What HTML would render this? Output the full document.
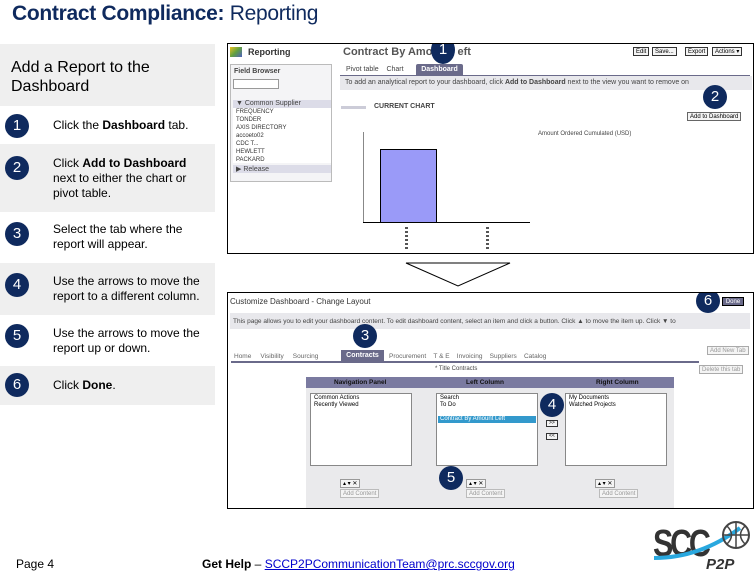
<!DOCTYPE html><html><head><style>
*{margin:0;padding:0;box-sizing:border-box}
body{width:756px;height:576px;position:relative;background:#fff;font-family:"Liberation Sans",sans-serif;overflow:hidden}
.a{position:absolute}
.c{position:absolute;width:24px;height:24px;border-radius:50%;background:#0f2a5e;color:#fff;font-size:15px;text-align:center;line-height:24px}
.t{position:absolute;left:53px;font-size:12px;color:#000;line-height:15px}
.g{background:#efefef}
.s{font-size:7px;color:#444}
.btn{position:absolute;border:1px solid #333;background:#f4f4f4;font-size:6px;padding:0 2px;height:9px;line-height:8px}
</style></head><body>
<div class="a" style="left:12px;top:2px;font-size:21px;color:#0f2a5e;font-weight:bold;letter-spacing:-0.3px">Contract Compliance: <span style="font-weight:normal">Reporting</span></div>

<div class="a g" style="left:0;top:44px;width:215px;height:62px"></div>
<div class="a" style="left:11px;top:58px;font-size:16px;line-height:19px">Add a Report to the<br>Dashboard</div>
<div class="a g" style="left:0;top:144px;width:215px;height:68px"></div>
<div class="a g" style="left:0;top:263px;width:215px;height:52px"></div>
<div class="a g" style="left:0;top:366px;width:215px;height:39px"></div>
<div class="c" style="left:5px;top:114px">1</div><div class="t" style="top:118px">Click the <b>Dashboard</b> tab.</div>
<div class="c" style="left:5px;top:156px">2</div><div class="t" style="top:156px">Click <b>Add to Dashboard</b><br>next to either the chart or<br>pivot table.</div>
<div class="c" style="left:5px;top:222px">3</div><div class="t" style="top:222px">Select the tab where the<br>report will appear.</div>
<div class="c" style="left:5px;top:273px">4</div><div class="t" style="top:274px">Use the arrows to move the<br>report to a different column.</div>
<div class="c" style="left:5px;top:324px">5</div><div class="t" style="top:326px">Use the arrows to move the<br>report up or down.</div>
<div class="c" style="left:5px;top:373px">6</div><div class="t" style="top:378px">Click <b>Done</b>.</div>

<!-- screenshot 1 -->
<div class="a" style="left:227px;top:43px;width:527px;height:211px;border:1px solid #000;overflow:hidden">
 <div class="a" style="left:2px;top:3px;width:12px;height:10px;background:linear-gradient(135deg,#e8c020,#60a040,#5060c0)"></div>
 <div class="a" style="left:20px;top:3px;font-size:9px;font-weight:bold;color:#333">Reporting</div>
 <div class="a" style="left:2px;top:20px;width:102px;height:118px;border:1px solid #bbb;background:#f4f4f6"></div>
 <div class="a s" style="left:6px;top:24px;font-weight:bold">Field Browser</div>
 <div class="a" style="left:5px;top:35px;width:46px;height:10px;border:1px solid #999;background:#fff"></div>
 <div class="a" style="left:5px;top:56px;width:98px;height:8px;background:#dcdce8"></div>
 <div class="a s" style="left:8px;top:56px">▼ Common Supplier</div>
 <div class="a" style="left:5px;top:64px;width:98px;height:55px;background:#fff;font-size:6px;color:#333;line-height:8px;padding-left:3px">FREQUENCY<br>TONDER<br>AXIS DIRECTORY<br>accoeto02<br>CDC T...<br>HEWLETT<br>PACKARD</div>
 <div class="a" style="left:5px;top:121px;width:98px;height:8px;background:#dcdce8"></div>
 <div class="a s" style="left:8px;top:121px">▶ Release</div>
 <div class="a" style="left:115px;top:2px;font-size:11px;font-weight:bold;color:#555">Contract By Amou&nbsp;&nbsp;&nbsp;&nbsp;&nbsp;&nbsp;eft</div>
 <div class="btn" style="left:405px;top:3px">Edit</div><div class="btn" style="left:424px;top:3px">Save...</div><div class="btn" style="left:457px;top:3px">Export</div><div class="btn" style="left:484px;top:3px">Actions ▾</div>
 <div class="a s" style="left:118px;top:22px">Pivot table&nbsp;&nbsp;&nbsp;&nbsp;Chart</div>
 <div class="a" style="left:188px;top:20px;width:47px;height:11px;background:#6a6a8a;color:#fff;font-size:7px;font-weight:bold;text-align:center;line-height:11px;border-radius:2px 2px 0 0">Dashboard</div>
 <div class="a" style="left:112px;top:31px;width:410px;height:1px;background:#6a6a8a"></div>
 <div class="a" style="left:112px;top:32px;width:412px;height:14px;background:#e8e8ec"></div>
 <div class="a s" style="left:117px;top:35px">To add an analytical report to your dashboard, click <b>Add to Dashboard</b> next to the view you want to remove on</div>
 <div class="a" style="left:113px;top:62px;width:25px;height:3px;background:#ccccd8"></div>
 <div class="a s" style="left:146px;top:59px;font-weight:bold">CURRENT CHART</div>
 <div class="btn" style="left:459px;top:68px;border-color:#666">Add to Dashboard</div>
 <div class="a s" style="left:310px;top:87px;font-size:6px">Amount Ordered Cumulated (USD)</div>
 <div class="a" style="left:135px;top:88px;width:1px;height:90px;background:#888"></div>
 <div class="a" style="left:135px;top:178px;width:167px;height:1px;background:#000"></div>
 <div class="a" style="left:152px;top:105px;width:57px;height:74px;background:#9a9af8;border:1px solid #000"></div>
 <div class="a" style="left:177px;top:183px;width:3px;height:24px;background:repeating-linear-gradient(#555 0 2px,#fff 2px 4px)"></div>
 <div class="a" style="left:258px;top:183px;width:3px;height:24px;background:repeating-linear-gradient(#555 0 2px,#fff 2px 4px)"></div>
 <div class="c" style="left:203px;top:-8px;width:24px;height:28px;border-radius:50%;line-height:28px">1</div>
 <div class="c" style="left:475px;top:41px">2</div>
</div>

<svg class="a" style="left:404px;top:260px" width="108" height="28"><polygon points="2,3 106,3 54,26" fill="#fff" stroke="#000" stroke-width="1"/></svg>

<!-- screenshot 2 -->
<div class="a" style="left:227px;top:292px;width:527px;height:217px;border:1px solid #000;overflow:hidden">
 <div class="a" style="left:2px;top:4px;font-size:8px;color:#333">Customize Dashboard - Change Layout</div>
 <div class="a" style="left:494px;top:4px;width:22px;height:9px;background:#6a6a8a;color:#fff;font-size:6px;text-align:center;line-height:9px;border:1px solid #000">Done</div>
 <div class="a" style="left:2px;top:20px;width:520px;height:16px;background:#e8e8ec"></div>
 <div class="a s" style="left:5px;top:25px;font-size:6.5px">This page allows you to edit your dashboard content. To edit dashboard content, select an item and click a button. Click ▲ to move the item up. Click ▼ to</div>
 <div class="a s" style="left:6px;top:60px;font-size:6.5px;color:#666">Home&nbsp;&nbsp;&nbsp;&nbsp;&nbsp;Visibility&nbsp;&nbsp;&nbsp;&nbsp;&nbsp;Sourcing</div>
 <div class="a" style="left:113px;top:57px;width:43px;height:11px;background:#6a6a8a;color:#fff;font-size:7px;font-weight:bold;text-align:center;line-height:11px">Contracts</div>
 <div class="a s" style="left:161px;top:60px;font-size:6.5px;color:#666">Procurement&nbsp;&nbsp;&nbsp;&nbsp;T &amp; E&nbsp;&nbsp;&nbsp;&nbsp;Invoicing&nbsp;&nbsp;&nbsp;&nbsp;Suppliers&nbsp;&nbsp;&nbsp;&nbsp;Catalog</div>
 <div class="a" style="left:3px;top:68px;width:468px;height:2px;background:#6a6a8a"></div>
 <div class="btn" style="left:479px;top:53px;border-color:#aaa;color:#999">Add New Tab</div>
 <div class="btn" style="left:471px;top:72px;border-color:#aaa;color:#999">Delete this tab</div>
 <div class="a s" style="left:207px;top:73px;font-size:6px">* Title Contracts</div>
 <div class="a" style="left:78px;top:84px;width:368px;height:133px;background:#eaeaec"></div>
 <div class="a" style="left:78px;top:84px;width:368px;height:11px;background:#7a7aa0"></div>
 <div class="a" style="left:78px;top:86px;width:368px;font-size:6.5px;font-weight:bold;color:#111"><span style="position:absolute;left:28px">Navigation Panel</span><span style="position:absolute;left:160px">Left Column</span><span style="position:absolute;left:290px">Right Column</span></div>
 <div class="a" style="left:82px;top:100px;width:102px;height:73px;background:#fff;border:1px solid #888;font-size:6px;padding:1px 3px;line-height:7px">Common Actions<br>Recently Viewed</div>
 <div class="a" style="left:208px;top:100px;width:102px;height:73px;background:#fff;border:1px solid #888;font-size:6px;padding:1px 3px;line-height:7px">Search<br>To Do<br><span style="display:block;background:#3399cc;color:#fff;margin:7px -2px 0;padding-left:2px">Contract By Amount Left</span></div>
 <div class="a" style="left:337px;top:100px;width:102px;height:73px;background:#fff;border:1px solid #888;font-size:6px;padding:1px 3px;line-height:7px">My Documents<br>Watched Projects</div>
 <div class="btn" style="left:318px;top:127px;height:7px;font-size:5px;line-height:5px">&gt;&gt;</div>
 <div class="btn" style="left:318px;top:140px;height:7px;font-size:5px;line-height:5px">&lt;&lt;</div>
 <div class="btn" style="left:112px;top:186px;border-color:#999">▴ ▾ ✕</div>
 <div class="btn" style="left:238px;top:186px;border-color:#999">▴ ▾ ✕</div>
 <div class="btn" style="left:367px;top:186px;border-color:#999">▴ ▾ ✕</div>
 <div class="btn" style="left:112px;top:196px;border-color:#bbb;color:#999">Add Content</div>
 <div class="btn" style="left:238px;top:196px;border-color:#bbb;color:#999">Add Content</div>
 <div class="btn" style="left:371px;top:196px;border-color:#bbb;color:#999">Add Content</div>
 <div class="c" style="left:468px;top:-4px">6</div>
 <div class="c" style="left:125px;top:31px">3</div>
 <div class="c" style="left:312px;top:100px">4</div>
 <div class="c" style="left:211px;top:173px">5</div>
</div>

<div class="a" style="left:16px;top:557px;font-size:12px">Page 4</div>
<div class="a" style="left:202px;top:557px;font-size:12px"><b>Get Help</b> – <span style="color:#0000cc;text-decoration:underline">SCCP2PCommunicationTeam@prc.sccgov.org</span></div>
<div class="a" style="left:653px;top:523px;font-size:38px;font-weight:bold;color:#333;letter-spacing:-4px;transform:scaleX(0.8);transform-origin:left">SCC</div>
<svg class="a" style="left:650px;top:516px" width="106" height="60"><path d="M4,42 Q50,42 90,12" stroke="#29a8df" stroke-width="4" fill="none"/><circle cx="86" cy="19" r="13" fill="none" stroke="#444" stroke-width="2"/><path d="M73,19h26M86,6v26M77,10q9,9 0,18M95,10q-9,9 0,18" stroke="#444" stroke-width="1.5" fill="none"/><text x="56" y="53" font-family="Liberation Sans" font-style="italic" font-weight="bold" font-size="15" fill="#333">P2P</text></svg>
</body></html>
